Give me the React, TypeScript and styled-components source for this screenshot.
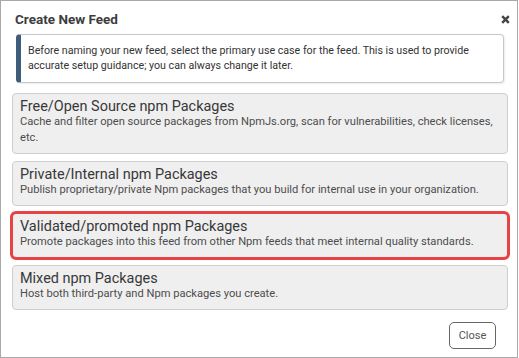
import React from "react";
import styled, { createGlobalStyle } from "styled-components";

const GlobalStyle = createGlobalStyle`
  html, body { margin: 0; padding: 0; background: #ffffff; }
  body { font-family: Roboto, "Liberation Sans", Arial, sans-serif; }
  * { box-sizing: border-box; }
`;

const Dialog = styled.div`
  width: 518px;
  height: 358px;
  border: 1px solid #a9a9a9;
  background: #ffffff;
  padding: 10px 9px 8px 11px;
  display: flex;
  flex-direction: column;
`;

const Header = styled.div`
  display: flex;
  align-items: center;
  justify-content: space-between;
  padding-left: 3px;
`;

const Title = styled.h1`
  margin: 0;
  font-size: 13.5px;
  line-height: 16px;
  font-weight: 700;
  color: #3d3d3d;
`;

const CloseIcon = styled.button`
  border: 0;
  background: transparent;
  padding: 0;
  margin-right: -2px;
  width: 9px;
  height: 9px;
  display: flex;
  cursor: pointer;
`;

const Info = styled.div`
  margin: 7px 4px 0 4px;
  border: 1px solid #c8c8c8;
  border-left: 5px solid #3f5c7b;
  border-radius: 4px;
  padding: 8px 8px 9px 7px;
  font-size: 10.65px;
  line-height: 15px;
  color: #333333;
  box-shadow: 1px 1px 2px rgba(0, 0, 0, 0.08);
`;

const Options = styled.div`
  margin-top: 10px;
  display: flex;
  flex-direction: column;
  gap: 7px;
`;

const Card = styled.div<{ $highlighted?: boolean }>`
  background: #efefef;
  border: 1px solid #cfcfcf;
  border-radius: 4px;
  padding: 6px 7px 7px 7px;
  cursor: pointer;
  outline: ${(p) => (p.$highlighted ? "3px solid #e94244" : "none")};
  outline-offset: -1px;
`;

const CardTitle = styled.div`
  font-size: 14.45px;
  line-height: 14px;
  color: #383838;
`;

const CardDesc = styled.div`
  font-size: 11.15px;
  line-height: 16px;
  color: #4d4d4d;
`;

const Footer = styled.div`
  margin-top: auto;
  display: flex;
  justify-content: flex-end;
  padding-right: 12px;
`;

const Button = styled.button`
  width: 47px;
  height: 27px;
  border: 1px solid #666666;
  border-radius: 5px;
  background: #ffffff;
  font-family: Roboto, "Liberation Sans", Arial, sans-serif;
  font-size: 11px;
  color: #555555;
  padding: 0;
  cursor: pointer;
`;

const options = [
  {
    title: "Free/Open Source npm Packages",
    desc: "Cache and filter open source packages from NpmJs.org, scan for vulnerabilities, check licenses, etc.",
  },
  {
    title: "Private/Internal npm Packages",
    desc: "Publish proprietary/private Npm packages that you build for internal use in your organization.",
  },
  {
    title: "Validated/promoted npm Packages",
    desc: "Promote packages into this feed from other Npm feeds that meet internal quality standards.",
    highlighted: true,
  },
  {
    title: "Mixed npm Packages",
    desc: "Host both third-party and Npm packages you create.",
  },
];

export default function App() {
  return (
    <>
      <GlobalStyle />
      <Dialog>
        <Header>
          <Title>Create New Feed</Title>
          <CloseIcon aria-label="Close">
            <svg width="9" height="9" viewBox="0 0 9 9">
              <path d="M1.2 1.2 L7.8 7.8 M7.8 1.2 L1.2 7.8" stroke="#444" strokeWidth="2.4" strokeLinecap="butt" />
            </svg>
          </CloseIcon>
        </Header>
        <Info>
          Before naming your new feed, select the primary use case for the feed. This is used to provide
          accurate setup guidance; you can always change it later.
        </Info>
        <Options>
          {options.map((o) => (
            <Card key={o.title} $highlighted={o.highlighted}>
              <CardTitle>{o.title}</CardTitle>
              <CardDesc>{o.desc}</CardDesc>
            </Card>
          ))}
        </Options>
        <Footer>
          <Button>Close</Button>
        </Footer>
      </Dialog>
    </>
  );
}
